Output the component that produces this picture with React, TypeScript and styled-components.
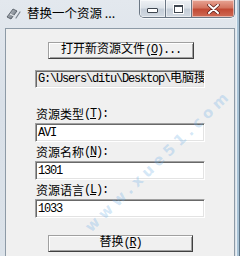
import React from "react";
import styled, {createGlobalStyle} from "styled-components";

const GlobalStyle = createGlobalStyle`
  html, body {
    margin: 0;
    padding: 0;
    background: #ffffff;
    overflow: hidden;
  }
  body {
    font-family: "Liberation Mono", "Noto Sans CJK SC", monospace;
    font-size: 12px;
    color: #000;
  }
`;

function App() {
  return (
    <>
      <GlobalStyle />
      <Window>
        <TitleBar>
          <AppIcon width="16" height="14" viewBox="0 0 16 14">
            <defs>
              <linearGradient id="ic" x1="0" y1="0" x2="1" y2="1">
                <stop offset="0" stopColor="#c9ced4" />
                <stop offset="1" stopColor="#5d6670" />
              </linearGradient>
            </defs>
            <path d="M2 11 L8 3 L12 5 L6 13 Z" fill="url(#ic)" stroke="#4a525b" strokeWidth="0.8" />
            <path d="M5 8 L9 10" stroke="#f2f4f6" strokeWidth="1" />
            <path d="M11 12 L15 6" stroke="#7b848e" strokeWidth="1.2" strokeLinecap="round" />
          </AppIcon>
          <Caption>替换一个资源 ...</Caption>
          <CaptionButtons>
            <CapBtn $kind="min">
              <MinGlyph />
            </CapBtn>
            <CapBtn $kind="max">
              <MaxGlyph />
            </CapBtn>
            <CapBtn $kind="close">
              <CloseGlyph width="13" height="10" viewBox="0 0 13 10">
                <path d="M2 1 L11 9 M11 1 L2 9" stroke="#5a1f1a" strokeWidth="3.4" strokeLinecap="round" />
                <path d="M2 1 L11 9 M11 1 L2 9" stroke="#ffffff" strokeWidth="2" strokeLinecap="round" />
              </CloseGlyph>
            </CapBtn>
          </CaptionButtons>
        </TitleBar>
        <Client>
          <OpenButton>
            打开新资源文件<Mono>(<u>O</u>)...</Mono>
          </OpenButton>
          <PathBox>
            <Mono>G:\Users\ditu\Desktop\</Mono>电脑搜
          </PathBox>
          <Label $first>
            资源类型<Mono>(<u>T</u>):</Mono>
          </Label>
          <Field>
            <Mono>AVI</Mono>
          </Field>
          <Label>
            资源名称<Mono>(<u>N</u>):</Mono>
          </Label>
          <Field>
            <Mono>1301</Mono>
          </Field>
          <Label>
            资源语言<Mono>(<u>L</u>):</Mono>
          </Label>
          <Field>
            <Mono>1033</Mono>
          </Field>
          <ReplaceButton>
            替换<Mono>(<u>R</u>)</Mono>
          </ReplaceButton>
        </Client>
        <Watermark>www.xue51.com</Watermark>
      </Window>
    </>
  );
}

export default App;

const Window = styled.div`
  position: relative;
  width: 240px;
  height: 256px;
  box-sizing: border-box;
  background: linear-gradient(180deg, #e3e8ee 0%, #d9e0e8 40%, #dbe2e9 100%);
  border-right: 1px solid #5f7486;
  box-shadow: inset -2px 0 0 #a9c3d6, inset -3px 0 0 #e9f0f5;
  display: flex;
  flex-direction: column;
  overflow: hidden;
`;

const TitleBar = styled.div`
  height: 28px;
  flex-shrink: 0;
  display: flex;
  align-items: flex-start;
  padding-left: 5px;
  padding-right: 4px;
`;

const AppIcon = styled.svg`
  margin-top: 6px;
  flex-shrink: 0;
`;

const Caption = styled.div`
  margin-left: 6px;
  margin-top: 5px;
  font-family: "Noto Sans CJK SC", sans-serif;
  font-size: 12.5px;
  line-height: 16px;
  color: #000;
  white-space: nowrap;
  flex: 1;
`;

const CaptionButtons = styled.div`
  display: flex;
  height: 17px;
  border: 1px solid #6b7784;
  border-top: none;
  border-radius: 0 0 5px 5px;
  overflow: hidden;
  box-shadow: 0 1px 0 rgba(255, 255, 255, 0.7);
`;

const CapBtn = styled.div<{$kind: "min" | "max" | "close"}>`
  width: ${(p) => (p.$kind === "close" ? "42px" : "25px")};
  display: flex;
  align-items: center;
  justify-content: center;
  border-left: ${(p) => (p.$kind === "min" ? "none" : "1px solid #6b7784")};
  background: ${(p) =>
    p.$kind === "close"
      ? "linear-gradient(180deg, #e8a595 0%, #d47560 45%, #c24a34 55%, #cf6b55 100%)"
      : "linear-gradient(180deg, #eef1f4 0%, #dde3e9 45%, #c5ced8 55%, #d3dae2 100%)"};
  box-shadow: inset 0 0 0 1px rgba(255, 255, 255, 0.5);
`;

const MinGlyph = styled.div`
  width: 9px;
  height: 3px;
  margin-top: 4px;
  border: 1px solid #3f4750;
  background: #fff;
  border-radius: 1px;
`;

const MaxGlyph = styled.div`
  width: 7px;
  height: 5px;
  border: 1px solid #3f4750;
  border-top-width: 2px;
  background: #fff;
  box-shadow: 0 0 0 1px #fff;
`;

const CloseGlyph = styled.svg`
  display: block;
`;

const Client = styled.div`
  flex: 1;
  margin: 0 4px 0 5px;
  background: #f0f0f0;
  border: 1px solid #8d9aa6;
  border-bottom: none;
  display: flex;
  flex-direction: column;
  align-items: flex-start;
  padding-left: 29px;
`;

const Mono = styled.span`
  font-family: "Liberation Mono", monospace;
  letter-spacing: -1.2px;
  u {
    text-underline-offset: 1px;
  }
`;

const RaisedButton = styled.div`
  box-sizing: border-box;
  height: 17px;
  margin-left: 13px;
  display: flex;
  align-items: center;
  justify-content: center;
  background: #f0f0f0;
  border: 1px solid;
  border-color: #a0a0a0 #404040 #404040 #a0a0a0;
  box-shadow: inset 1px 1px 0 #ffffff, inset -1px -1px 0 #a0a0a0;
  font-size: 12px;
  line-height: 15px;
  white-space: nowrap;
`;

const OpenButton = styled(RaisedButton)`
  margin-top: 13px;
  width: 146px;
`;

const ReplaceButton = styled(RaisedButton)`
  margin-top: 17px;
  width: 145px;
`;

const Sunken = styled.div`
  box-sizing: border-box;
  width: 170px;
  display: flex;
  align-items: center;
  padding-left: 2px;
  border: 1px solid;
  border-color: #a0a0a0 #ffffff #ffffff #a0a0a0;
  box-shadow: inset 1px 1px 0 #696969, inset -1px -1px 0 #e3e3e3;
  font-size: 12px;
  line-height: 14px;
  white-space: nowrap;
  overflow: hidden;
`;

const PathBox = styled(Sunken)`
  margin-top: 11px;
  height: 18px;
  background: #ebebeb;
`;

const Field = styled(Sunken)`
  height: 19px;
  background: #ffffff;
`;

const Label = styled.div<{$first?: boolean}>`
  margin-top: ${(p) => (p.$first ? "16px" : "0")};
  height: 19px;
  display: flex;
  align-items: center;
  padding-left: 1px;
  font-size: 12px;
  white-space: nowrap;
`;

const Watermark = styled.div`
  position: absolute;
  left: 60px;
  top: 152px;
  width: 196px;
  text-align: center;
  transform: rotate(-44deg);
  transform-origin: center;
  font-family: "DejaVu Sans", sans-serif;
  font-weight: bold;
  font-size: 15px;
  letter-spacing: 4.5px;
  color: rgba(110, 175, 230, 0.3);
  pointer-events: none;
  white-space: nowrap;
`;
